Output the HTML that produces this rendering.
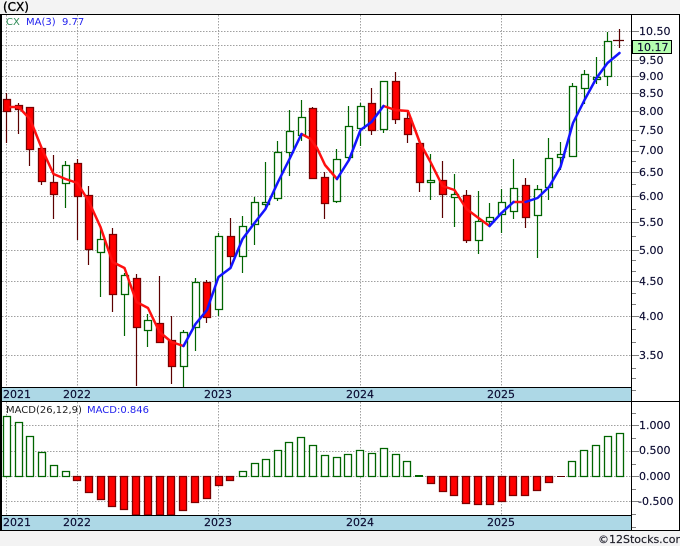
<!DOCTYPE html>
<html><head><meta charset="utf-8"><style>
html,body{margin:0;padding:0;background:#f3f3f3;width:680px;height:546px;overflow:hidden}
svg{display:block}
text{font-family:"DejaVu Sans","Liberation Sans",sans-serif;font-size:11px;fill:#0a0a30;stroke:#0a0a30;stroke-width:.15}
</style></head><body>
<svg width="680" height="546" viewBox="0 0 680 546" xmlns="http://www.w3.org/2000/svg">
<rect width="680" height="546" fill="#f3f3f3"/>
<rect x="0" y="14" width="680" height="516" fill="#fff"/>
<rect x="2" y="388" width="630" height="13" fill="#add8e6"/>
<rect x="2" y="516" width="630" height="14" fill="#add8e6"/>
<g stroke="#a0a0a0" stroke-dasharray="1.5 1.5" fill="none" shape-rendering="crispEdges">
<path d="M2 31.5H632M2 45.5H632M2 60.5H632M2 76.5H632M2 93.5H632M2 111.5H632M2 130.5H632M2 151.5H632M2 172.5H632M2 196.5H632M2 222.5H632M2 250.5H632M2 281.5H632M2 316.5H632M2 355.5H632"/>
<path d="M2 425.5H632M2 451.5H632M2 476.5H632M2 501.5H632"/>
<path d="M6.5 15V387M77.5 15V387M218.5 15V387M360.5 15V387M501.5 15V387"/>
<path d="M6.5 402V515M77.5 402V515M218.5 402V515M360.5 402V515M501.5 402V515"/>
</g>
<!-- wicks -->
<path fill="none" stroke="#5c0000" stroke-width="1.2" d="M6.5 93V143M18.5 103V134M29.5 107V166M41.5 148V185M53.5 155V219M77.5 159V240M88.5 186V265M112.5 228V312M136.5 274V386M159.5 276V343M171.5 316V384M206.5 280V323M230.5 218V268M312.5 107V178M324.5 172V219M371.5 88V135M395.5 72V124M407.5 112V143M419.5 143V192M442.5 161V218M466.5 190V243M525.5 178V228M619.5 29V48M613 40.5H624"/>
<path fill="none" stroke="#006400" stroke-width="1.2" d="M65.5 161V208M100.5 227V297M124.5 273V336M147.5 314V347M183.5 330V387M195.5 278V351M218.5 233V316M242.5 216V273M254.5 197V245M265.5 162V208M277.5 141V201M289.5 110V176M301.5 100V141M336.5 149V203M348.5 106V160M360.5 103V146M383.5 82V133M430.5 154V200M454.5 174V227M478.5 191V254M489.5 203V226M501.5 189V233M513.5 159V219M537.5 185V258M548.5 138V200M560.5 142V170M572.5 83V157M584.5 70V104M596.5 57V84M607.5 32V86"/>
<!-- bodies -->
<path fill="#ff0000" stroke="#7a0000" stroke-width="1.3" d="M3.5 99.5h7v12h-7zM15.5 105.5h7v4h-7zM26.5 107.5h7v42h-7zM38.5 148.5h7v33h-7zM50.5 182.5h7v12h-7zM74.5 163.5h7v33h-7zM85.5 195.5h7v54h-7zM109.5 234.5h7v60h-7zM133.5 278.5h7v49h-7zM156.5 323.5h7v19h-7zM168.5 340.5h7v26h-7zM203.5 282.5h7v35h-7zM227.5 236.5h7v20h-7zM309.5 108.5h7v70h-7zM321.5 177.5h7v26h-7zM368.5 103.5h7v27h-7zM392.5 81.5h7v38h-7zM404.5 118.5h7v16h-7zM416.5 143.5h7v39h-7zM439.5 180.5h7v14h-7zM463.5 195.5h7v45h-7zM522.5 185.5h7v32h-7z"/>
<path fill="#fff" stroke="#006400" stroke-width="1.3" d="M62.5 165.5h7v18h-7zM97.5 239.5h7v13h-7zM121.5 275.5h7v19h-7zM144.5 320.5h7v10h-7zM180.5 332.5h7v34h-7zM192.5 282.5h7v45h-7zM215.5 236.5h7v73h-7zM239.5 226.5h7v30h-7zM251.5 202.5h7v22h-7zM262.5 202.5h7v2h-7zM274.5 152.5h7v46h-7zM286.5 131.5h7v21h-7zM298.5 117.5h7v18h-7zM333.5 159.5h7v42h-7zM345.5 126.5h7v31h-7zM357.5 106.5h7v22h-7zM380.5 81.5h7v48h-7zM427.5 180.5h7v2h-7zM451.5 194.5h7v3h-7zM475.5 221.5h7v19h-7zM486.5 217.5h7v4h-7zM498.5 202.5h7v12h-7zM510.5 188.5h7v23h-7zM534.5 189.5h7v26h-7zM545.5 158.5h7v29h-7zM557.5 154.5h7v3h-7zM569.5 86.5h7v70h-7zM581.5 74.5h7v14h-7zM593.5 77.5h7v2h-7zM604.5 41.5h7v35h-7z"/>
<!-- MA -->
<g fill="none" stroke-width="2.5" stroke-linejoin="round" stroke-linecap="round">
<path stroke="#ff1010" d="M10 107L18.5 107L30 119L42 149L53.5 174L65.5 179L77.5 183L89 202L100.5 227L112.5 262L124.5 268L136.5 302L148 308L159.5 332L171.5 342L183.5 346"/>
<path stroke="#ff1010" d="M301.5 134L310 138.5L317 148L325 165L337 179"/>
<path stroke="#ff1010" d="M383.5 106L395.5 110L408 111L420 143L430.5 162L442.5 186L454.5 190L466.5 209L478.5 218L489.5 226"/>
<path stroke="#ff1010" d="M513.5 202L525.5 202"/>
<path stroke="#1414ff" d="M183.5 346L195.5 324L207 310L218.5 277L230.5 268L242.5 239L254.5 223L265.5 209L278 182L290 158L301.5 134"/>
<path stroke="#1414ff" d="M337 179L349 160L360.5 130L371.5 122L383.5 106"/>
<path stroke="#1414ff" d="M489.5 226L501.5 213L513.5 202"/>
<path stroke="#1414ff" d="M525.5 202L537.5 198L549 187L560.5 167L573 123L584.5 100L596.5 78L607.5 63L619.5 53"/>
</g>
<!-- MACD -->
<path fill="#fff" stroke="#006400" stroke-width="1.3" d="M3.5 416.5h7v60h-7zM15.5 422.5h7v54h-7zM26.5 436.5h7v40h-7zM38.5 452.5h7v24h-7zM50.5 465.5h7v11h-7zM62.5 471.5h7v5h-7zM239.5 471.5h7v5h-7zM251.5 463.5h7v13h-7zM262.5 459.5h7v17h-7zM274.5 450.5h7v26h-7zM285.5 442.5h7v34h-7zM297.5 437.5h7v39h-7zM309.5 445.5h7v31h-7zM321.5 455.5h7v21h-7zM333.5 457.5h7v19h-7zM344.5 454.5h7v22h-7zM356.5 450.5h7v26h-7zM368.5 453.5h7v23h-7zM380.5 448.5h7v28h-7zM392.5 454.5h7v22h-7zM403.5 461.5h7v15h-7zM568.5 461.5h7v15h-7zM580.5 450.5h7v26h-7zM592.5 445.5h7v31h-7zM604.5 436.5h7v40h-7zM616.5 433.5h7v43h-7z"/>
<path fill="#006400" d="M415 475h8v2h-8z"/>
<path fill="#ff0000" stroke="#7a0000" stroke-width="1.3" d="M73.5 476.5h7v4h-7zM85.5 476.5h7v16h-7zM97.5 476.5h7v23h-7zM108.5 476.5h7v30h-7zM120.5 476.5h7v33h-7zM132.5 476.5h7v38.5h-7zM144.5 476.5h7v38.5h-7zM156.5 476.5h7v38.5h-7zM167.5 476.5h7v38.5h-7zM179.5 476.5h7v34h-7zM191.5 476.5h7v26h-7zM203.5 476.5h7v22h-7zM215.5 476.5h7v9h-7zM226.5 476.5h7v4h-7zM427.5 476.5h7v7h-7zM439.5 476.5h7v15h-7zM450.5 476.5h7v19h-7zM462.5 476.5h7v27h-7zM474.5 476.5h7v28h-7zM486.5 476.5h7v28h-7zM498.5 476.5h7v25h-7zM509.5 476.5h7v19h-7zM521.5 476.5h7v19h-7zM533.5 476.5h7v14h-7zM545.5 476.5h7v6h-7z"/>
<path stroke="#5c0000" d="M557 476.5h8"/>
<!-- frame -->
<g shape-rendering="crispEdges">
<path stroke="#000" stroke-width="1" d="M0 14.5H680M2 387.5H632M0 401.5H680M2 515.5H632M0 530.5H680M631.5 14V530M679.5 14V530"/>
<rect x="0" y="14" width="2" height="517" fill="#000"/>
<path stroke="#808080" d="M632 31.5h7M632 45.5h7M632 60.5h7M632 76.5h7M632 93.5h7M632 111.5h7M632 130.5h7M632 151.5h7M632 172.5h7M632 196.5h7M632 222.5h7M632 250.5h7M632 281.5h7M632 316.5h7M632 355.5h7"/>
<path stroke="#808080" d="M632 140.5h4M632 161.5h4M632 184.5h4M632 209.5h4M632 236.5h4M632 260.5h4M632 271.5h4M632 293.5h4M632 304.5h4M632 329.5h4M632 342.5h4M632 368.5h4M632 378.5h4M632 390.5h4"/>
<path stroke="#808080" d="M632 425.5h7M632 451.5h7M632 476.5h7M632 501.5h7M632 413.5h4M632 438.5h4M632 464.5h4M632 489.5h4M632 514.5h4M632 527.5h4"/>
</g>
<rect x="632.5" y="40.5" width="39" height="13" fill="#b6ffb0" stroke="#000"/>
<!-- text -->
<text x="3" y="11" style="font-size:12px;fill:#000;stroke:#000;stroke-width:.35">(CX)</text>
<text x="6" y="25" style="font-size:10px;fill:#2e8b57;stroke:none">CX</text>
<text x="26" y="25" style="font-size:10px;fill:#2222ee;stroke:none">MA(3)</text>
<text x="62" y="25" style="font-size:10px;fill:#2222ee;stroke:none">9.77</text>
<g>
<text x="639" y="35">10.50</text>
<text x="637" y="51">10.17</text>
<text x="639" y="64">9.50</text>
<text x="639" y="80">9.00</text>
<text x="639" y="97">8.50</text>
<text x="639" y="115">8.00</text>
<text x="639" y="134">7.50</text>
<text x="639" y="154">7.00</text>
<text x="639" y="176">6.50</text>
<text x="639" y="200">6.00</text>
<text x="639" y="226">5.50</text>
<text x="639" y="254">5.00</text>
<text x="639" y="285">4.50</text>
<text x="639" y="320">4.00</text>
<text x="639" y="359">3.50</text>
<text x="639" y="429">1.000</text>
<text x="639" y="454">0.500</text>
<text x="639" y="480">0.000</text>
<text x="638" y="505">-0.500</text>
</g>
<g>
<text x="3" y="398">2021</text><text x="63" y="398">2022</text><text x="204" y="398">2023</text><text x="346" y="398">2024</text><text x="487" y="398">2025</text>
<text x="3" y="526">2021</text><text x="63" y="526">2022</text><text x="204" y="526">2023</text><text x="346" y="526">2024</text><text x="487" y="526">2025</text>
</g>
<text x="6" y="413" style="font-size:10px;fill:#222;stroke:none">MACD(26,12,9)</text>
<text x="87" y="413" style="font-size:10px;fill:#2222ee;stroke:none">MACD:0.846</text>
<text x="598" y="543" style="font-size:11px;fill:#222">©12Stocks.com</text>
</svg>
</body></html>
